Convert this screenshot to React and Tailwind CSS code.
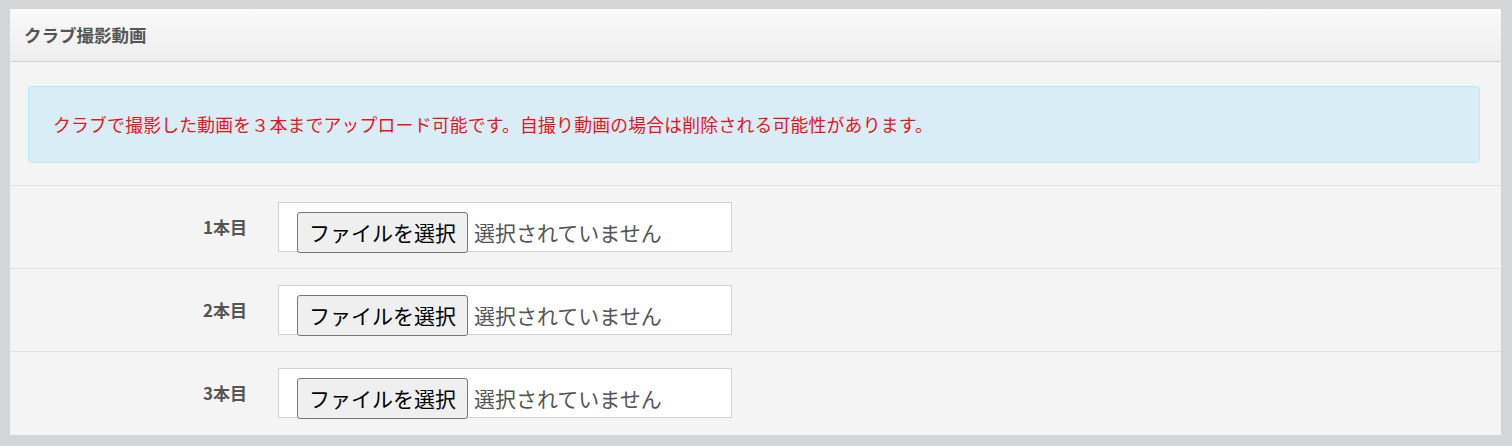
import React from 'react';

const jp = { fontFamily: '"Noto Sans CJK JP", "Noto Sans", sans-serif' };

const FileRow = ({ label }) => (
  <div className="flex items-start border-t border-[#e2e2e2] h-[83px] pt-[16px]">
    <div className="w-[237px] shrink-0 text-right text-[17px] font-bold text-[#555] leading-none pt-[16px]">
      {label}
    </div>
    <div className="ml-[31px] w-[454px] h-[50px] bg-white border border-[#d2d2d2] flex items-start pt-[9px] pl-[18px]">
      <button className="h-[41px] px-[11px] bg-[#efefef] border border-[#767676] rounded-[3px] text-[21px] text-black leading-none">
        ファイルを選択
      </button>
      <span className="ml-[6px] text-[21px] text-[#555] leading-[41px]">選択されていません</span>
    </div>
  </div>
);

const App = () => {
  return (
    <div className="w-[1512px] h-[446px] bg-[#d4d5d7] pt-[9px] pl-[10px] pr-[11px] pb-[11px]" style={jp}>
      <div className="h-full bg-[#f4f4f4] flex flex-col">
        <div className="h-[53px] shrink-0 flex items-center pl-[14px] border-b border-[#d0d0d0] bg-linear-to-b from-[#f9f9f9] to-[#eeeeee]">
          <h1 className="text-[17.5px] font-bold text-[#555] leading-none">クラブ撮影動画</h1>
        </div>
        <div className="pt-[24px] pb-[22px] pl-[18px] pr-[21px]">
          <div className="h-[77px] bg-[#d9edf7] border border-[#bce8f1] rounded-[4px] flex items-center pl-[24px]">
            <p className="text-[17.8px] tracking-[0.25px] text-[#e8141c] leading-none">
              クラブで撮影した動画を３本までアップロード可能です。自撮り動画の場合は削除される可能性があります。
            </p>
          </div>
        </div>
        <FileRow label="1本目" />
        <FileRow label="2本目" />
        <FileRow label="3本目" />
      </div>
    </div>
  );
};

export default App;
